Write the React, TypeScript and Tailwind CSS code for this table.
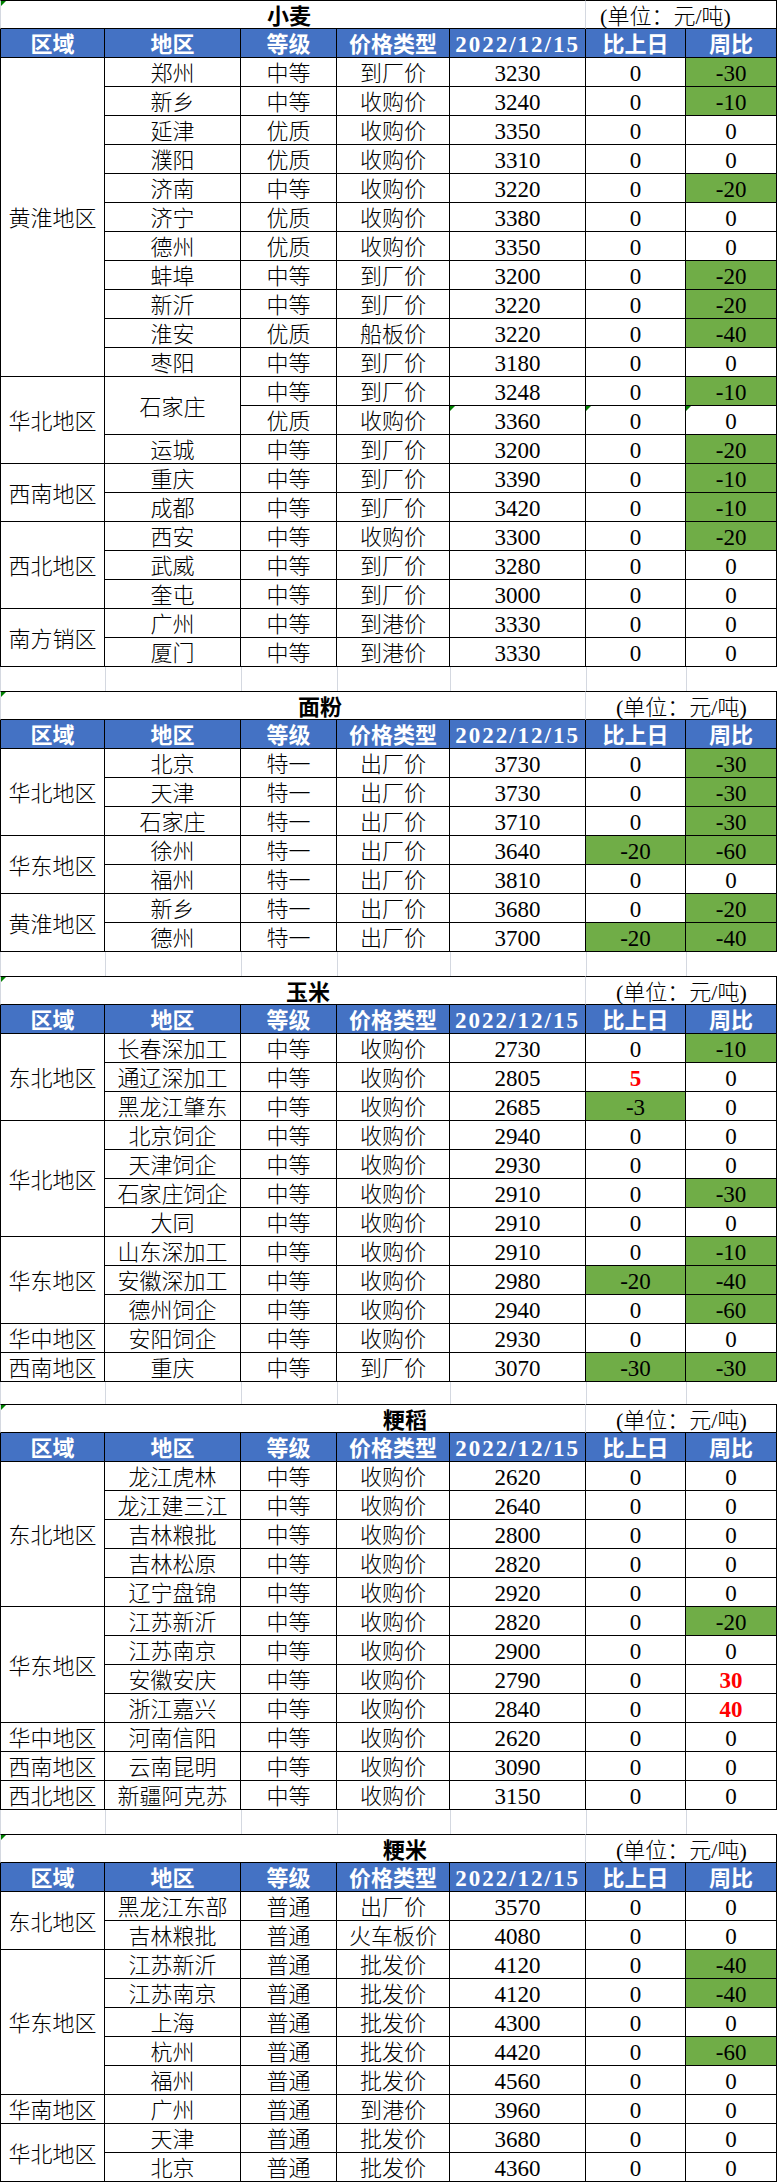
import React from "react";

type Row = {
  region?: { text: string; span: number };
  area?: { text: string; span: number };
  grade: string;
  kind: string;
  price: string;
  day: string;
  week: string;
  marks?: boolean;
};

type Section = {
  title: string;
  titlePad: string;
  unitPad: string;
  gap: string;
  rows: Row[];
};

// "华北地区*3 石家庄*2 中等 到厂价 3248 0 -10"
// 7 fields = region + area, 6 = area only, 5 = both covered by a span above
function parse(lines: string[]): Row[] {
  return lines.map((line) => {
    const marks = line.endsWith("!");
    const f = line.replace("!", "").trim().split(/\s+/);
    const cell = (s: string) => {
      const [text, n] = s.split("*");
      return { text, span: n ? Number(n) : 1 };
    };
    const row: Row = { grade: "", kind: "", price: "", day: "", week: "", marks };
    let i = 0;
    if (f.length === 7) row.region = cell(f[i++]);
    if (f.length >= 6) row.area = cell(f[i++]);
    row.grade = f[i++];
    row.kind = f[i++];
    row.price = f[i++];
    row.day = f[i++];
    row.week = f[i++];
    return row;
  });
}

const sections: Section[] = [
  {
    title: "小麦",
    titlePad: "pl-[266px]",
    unitPad: "pl-[14px]",
    gap: "h-[24px]",
    rows: parse([
      "黄淮地区*11 郑州 中等 到厂价 3230 0 -30",
      "新乡 中等 收购价 3240 0 -10",
      "延津 优质 收购价 3350 0 0",
      "濮阳 优质 收购价 3310 0 0",
      "济南 中等 收购价 3220 0 -20",
      "济宁 优质 收购价 3380 0 0",
      "德州 优质 收购价 3350 0 0",
      "蚌埠 中等 到厂价 3200 0 -20",
      "新沂 中等 到厂价 3220 0 -20",
      "淮安 优质 船板价 3220 0 -40",
      "枣阳 中等 到厂价 3180 0 0",
      "华北地区*3 石家庄*2 中等 到厂价 3248 0 -10",
      "优质 收购价 3360 0 0 !",
      "运城 中等 到厂价 3200 0 -20",
      "西南地区*2 重庆 中等 到厂价 3390 0 -10",
      "成都 中等 到厂价 3420 0 -10",
      "西北地区*3 西安 中等 收购价 3300 0 -20",
      "武威 中等 到厂价 3280 0 0",
      "奎屯 中等 到厂价 3000 0 0",
      "南方销区*2 广州 中等 到港价 3330 0 0",
      "厦门 中等 到港价 3330 0 0",
    ]),
  },
  {
    title: "面粉",
    titlePad: "pl-[297px]",
    unitPad: "pl-[30px]",
    gap: "h-[24px]",
    rows: parse([
      "华北地区*3 北京 特一 出厂价 3730 0 -30",
      "天津 特一 出厂价 3730 0 -30",
      "石家庄 特一 出厂价 3710 0 -30",
      "华东地区*2 徐州 特一 出厂价 3640 -20 -60",
      "福州 特一 出厂价 3810 0 0",
      "黄淮地区*2 新乡 特一 出厂价 3680 0 -20",
      "德州 特一 出厂价 3700 -20 -40",
    ]),
  },
  {
    title: "玉米",
    titlePad: "pl-[285px]",
    unitPad: "pl-[30px]",
    gap: "h-[22px]",
    rows: parse([
      "东北地区*3 长春深加工 中等 收购价 2730 0 -10",
      "通辽深加工 中等 收购价 2805 5 0",
      "黑龙江肇东 中等 收购价 2685 -3 0",
      "华北地区*4 北京饲企 中等 收购价 2940 0 0",
      "天津饲企 中等 收购价 2930 0 0",
      "石家庄饲企 中等 收购价 2910 0 -30",
      "大同 中等 收购价 2910 0 0",
      "华东地区*3 山东深加工 中等 收购价 2910 0 -10",
      "安徽深加工 中等 收购价 2980 -20 -40",
      "德州饲企 中等 收购价 2940 0 -60",
      "华中地区*1 安阳饲企 中等 收购价 2930 0 0",
      "西南地区*1 重庆 中等 到厂价 3070 -30 -30",
    ]),
  },
  {
    title: "粳稻",
    titlePad: "pl-[382px]",
    unitPad: "pl-[30px]",
    gap: "h-[24px]",
    rows: parse([
      "东北地区*5 龙江虎林 中等 收购价 2620 0 0",
      "龙江建三江 中等 收购价 2640 0 0",
      "吉林粮批 中等 收购价 2800 0 0",
      "吉林松原 中等 收购价 2820 0 0",
      "辽宁盘锦 中等 收购价 2920 0 0",
      "华东地区*4 江苏新沂 中等 收购价 2820 0 -20",
      "江苏南京 中等 收购价 2900 0 0",
      "安徽安庆 中等 收购价 2790 0 30",
      "浙江嘉兴 中等 收购价 2840 0 40",
      "华中地区*1 河南信阳 中等 收购价 2620 0 0",
      "西南地区*1 云南昆明 中等 收购价 3090 0 0",
      "西北地区*1 新疆阿克苏 中等 收购价 3150 0 0",
    ]),
  },
  {
    title: "粳米",
    titlePad: "pl-[382px]",
    unitPad: "pl-[30px]",
    gap: "",
    rows: parse([
      "东北地区*2 黑龙江东部 普通 出厂价 3570 0 0",
      "吉林粮批 普通 火车板价 4080 0 0",
      "华东地区*5 江苏新沂 普通 批发价 4120 0 -40",
      "江苏南京 普通 批发价 4120 0 -40",
      "上海 普通 批发价 4300 0 0",
      "杭州 普通 批发价 4420 0 -60",
      "福州 普通 批发价 4560 0 0",
      "华南地区*1 广州 普通 到港价 3960 0 0",
      "华北地区*2 天津 普通 批发价 3680 0 0",
      "北京 普通 批发价 4360 0 0",
    ]),
  },
];

const colW = ["w-[105px]", "w-[136px]", "w-[96px]", "w-[113px]", "w-[136px]", "w-[100px]", "w-[91px]"];
const heads = ["区域", "地区", "等级", "价格类型", "2022/12/15", "比上日", "周比"];

const cellBase = "p-0 pt-[4px] text-center align-middle leading-[22px] border-b border-r border-black";
const cjk = "text-[22px] font-light";
const num = "text-[23px]";

function tone(v: string) {
  if (v.startsWith("-")) return "bg-[#70ad47]";
  if (v !== "0") return "font-bold text-[#ff0000]";
  return "";
}

function Mark() {
  return (
    <span className="absolute left-0 top-0 h-0 w-0 border-t-[5px] border-r-[5px] border-t-[#008000] border-r-transparent" />
  );
}

function Table({ s }: { s: Section }) {
  return (
    <table className="w-[777px] table-fixed border-separate border-spacing-0">
      <colgroup>
        {colW.map((w) => (
          <col key={w} className={w} />
        ))}
      </colgroup>
      <tbody>
        <tr className="h-[29px]">
          <td
            colSpan={5}
            className={`relative p-0 pt-[4px] text-left align-middle text-[22px] font-bold leading-[22px] border-t border-b border-l border-r border-t-black border-b-black border-l-[#d4d8e0] border-r-[#d4d8e0] ${s.titlePad}`}
          >
            <Mark />
            {s.title}
          </td>
          <td
            colSpan={2}
            className={`p-0 pt-[4px] text-left align-middle text-[22px] font-light leading-[22px] border-t border-b border-r border-black ${s.unitPad}`}
          >
            (单位：元/吨)
          </td>
        </tr>
        <tr className="h-[29px] bg-[#4472c4] text-white">
          {heads.map((h, i) => (
            <th
              key={h}
              className={`${cellBase} font-bold ${i === 4 ? "text-[23px] tracking-[2px]" : "text-[22px]"} ${i === 0 ? "border-l" : ""}`}
            >
              {h}
            </th>
          ))}
        </tr>
        {s.rows.map((r, idx) => (
          <tr key={idx} className="h-[29px]">
            {r.region && (
              <td rowSpan={r.region.span} className={`${cellBase} ${cjk} border-l`}>
                {r.region.text}
              </td>
            )}
            {r.area && (
              <td rowSpan={r.area.span} className={`${cellBase} ${cjk}`}>
                {r.area.text}
              </td>
            )}
            <td className={`${cellBase} ${cjk}`}>{r.grade}</td>
            <td className={`${cellBase} ${cjk}`}>{r.kind}</td>
            <td className={`relative ${cellBase} ${num}`}>
              {r.marks && <Mark />}
              {r.price}
            </td>
            <td className={`relative ${cellBase} ${num} ${tone(r.day)}`}>
              {r.marks && <Mark />}
              {r.day}
            </td>
            <td className={`relative ${cellBase} ${num} ${tone(r.week)}`}>
              {r.marks && <Mark />}
              {r.week}
            </td>
          </tr>
        ))}
      </tbody>
    </table>
  );
}

export default function App() {
  return (
    <div className="w-[777px] bg-white text-black font-['Liberation_Serif','Noto_Sans_CJK_SC',serif]">
      {sections.map((s) => (
        <div key={s.title}>
          <Table s={s} />
          {s.gap && (
            <div className={`flex ${s.gap}`}>
              {colW.map((w) => (
                <div key={w} className={`${w} border-l border-[#d4d8e0]`} />
              ))}
            </div>
          )}
        </div>
      ))}
    </div>
  );
}
